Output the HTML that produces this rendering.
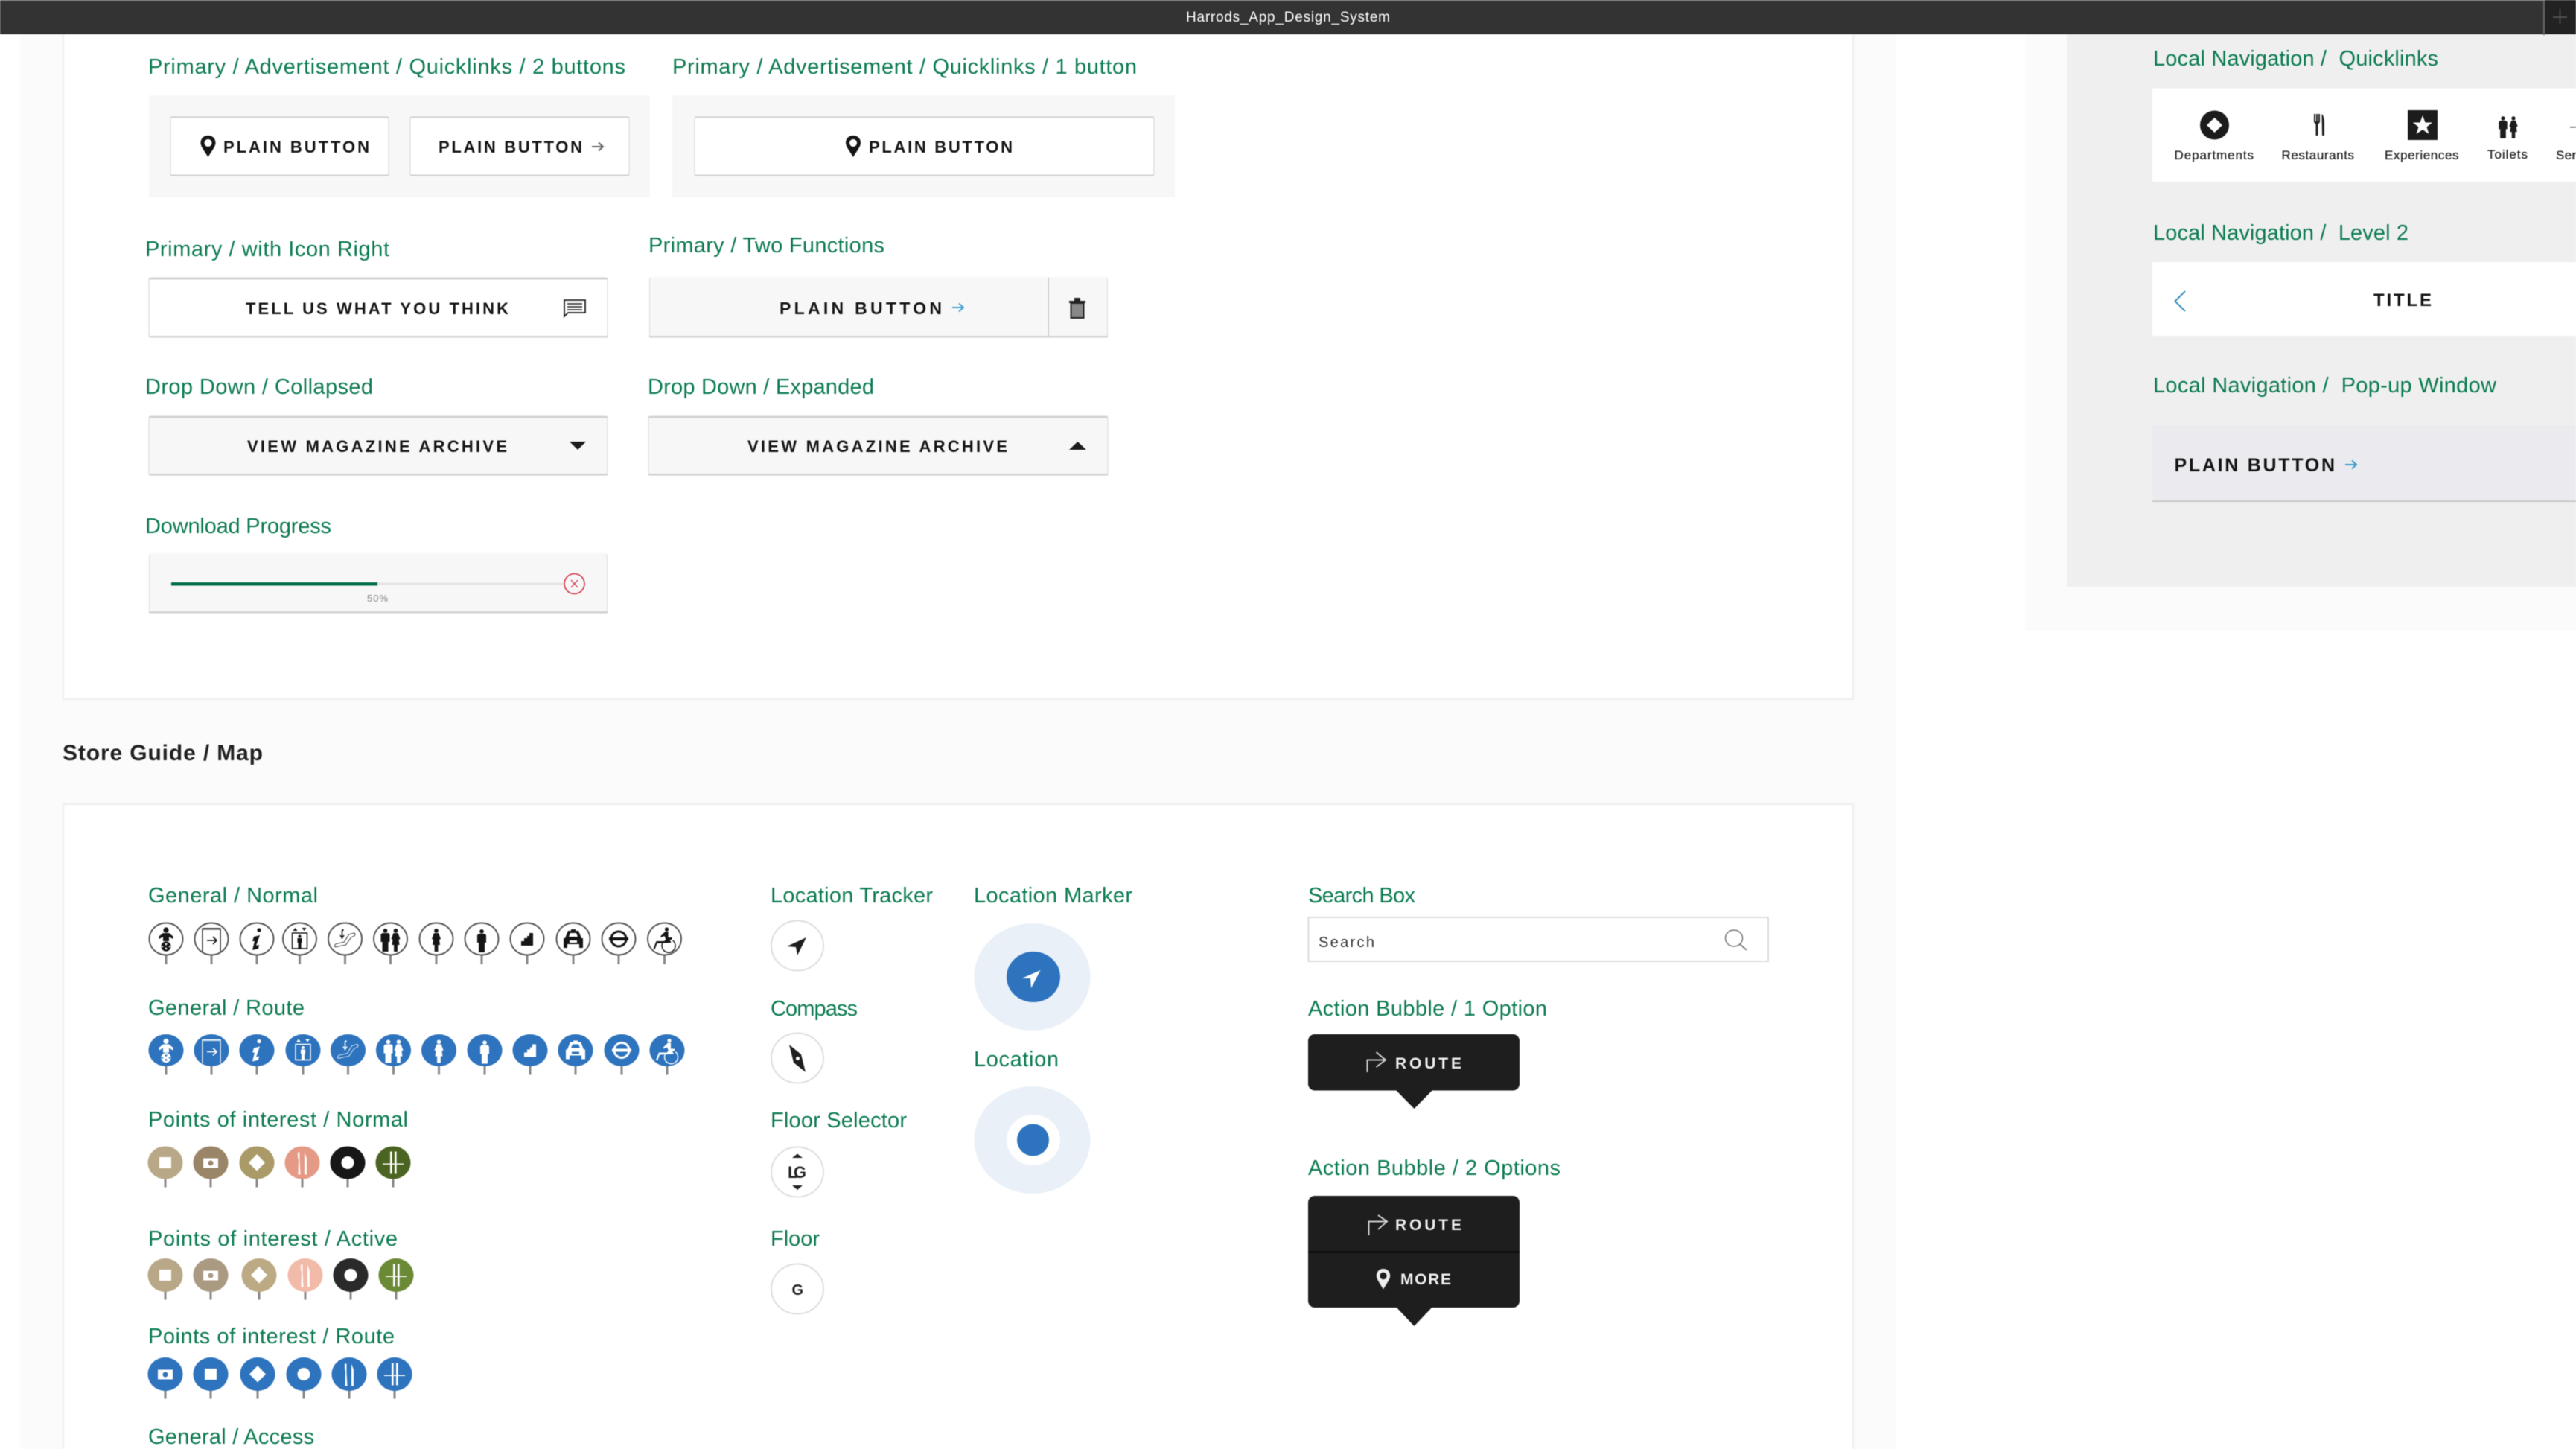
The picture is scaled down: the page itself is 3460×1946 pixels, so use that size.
<!DOCTYPE html>
<html lang="en"><head><meta charset="utf-8"><title>Harrods_App_Design_System</title>
<style>
html,body{margin:0;padding:0;background:#fff;width:3460px;height:1946px;overflow:hidden}
svg{display:block;position:absolute;left:0;top:0;filter:blur(.5px)}
text{font-family:"Liberation Sans",sans-serif}
.l{font-size:29px;fill:#0b7b50}
.b{font-size:22px;font-weight:700;fill:#151515}
.q{font-size:17px;fill:#2a2a2a;stroke:#2a2a2a;stroke-width:.3}
.w{font-size:21px;font-weight:700;fill:#eee}
.N{color:#151515;--bg:#fff}
.R{color:#fff;--bg:#2e73bd}
.P{color:#fff}
</style></head><body>
<svg width="3460" height="1946" viewBox="0 0 3460 1946" xmlns="http://www.w3.org/2000/svg">
<defs>
<g id="pinN"><rect x="-1.5" y="21" width="3" height="13" fill="#888"/><ellipse rx="22.5" ry="21.5" fill="#fff" stroke="#555" stroke-width="1.9"/></g>
<g id="pinR"><rect x="-1.5" y="20" width="3" height="13" fill="#888"/><ellipse rx="23.5" ry="21.5" fill="#2e73bd"/></g>
<rect id="st" x="-1.5" y="20" width="3" height="13" fill="#888"/>
<g id="baby" fill="currentColor"><circle cx="0" cy="-12" r="3.6"/><path d="M-4-8H4L10-3 9 0 4-3V3H-4V-3L-9 0-10-3Z"/><circle cy="10" r="6.6"/><path d="M-2 6H2L0 9ZM-2 14H2L0 11ZM-6 9-3 10-6 12ZM6 9 3 10 6 12Z" fill="var(--bg)"/></g>
<g id="exit" fill="none" stroke="currentColor"><path d="M-12 17V-14H12V17" stroke-width="1.3"/><path d="M-12-13.5H12" stroke-width="2.4" opacity=".6"/><path d="M-6 2H6M2-3 7 2 2 7" stroke-width="1.6"/></g>
<g id="info" fill="currentColor"><circle cx="3" cy="-12" r="2.6"/><path d="M-4-3 4-5-1 9 3 8 2 13-6 15-3 3-6 3Z"/></g>
<g id="lift" fill="currentColor"><path d="M-10-8H10V13H-10Z" fill="none" stroke="currentColor" stroke-width="1.4"/><circle cy="-3.5" r="2"/><path d="M-3-1H3V5H2V13H-2V5H-3Z"/><path d="M-9-11-6-15-3-11ZM3-15H9L6-11Z"/></g>
<g id="esc" fill="none" stroke="currentColor"><path d="M-14 10C-14 7-12 6-9 6L-1 4 5-6 12-8C14-8 14-5 12-4L8-2 1 8-9 10C-12 11-14 11-14 10Z" stroke-width=".8"/><path d="M-4-12V-1M-6.5-5-4-1-1.500-5" stroke-width="1.5"/><circle cx="-3" cy="-12" r="1.2" fill="currentColor" stroke="none"/></g>
<path id="man" fill="currentColor" d="M0-15A2.8 2.8 0 1 1-.01-15ZM-4-9H4L6-7V3H4V16H-4V3H-6V-7Z"/>
<path id="wom" fill="currentColor" d="M0-15A2.8 2.8 0 1 1-.01-15ZM-3-9H3L6-1 4 0 5 7H2.4V16H-2.4V7H-5L-4 0-6-1Z"/>
<g id="wc"><use href="#man" transform="translate(-7,1)"/><use href="#wom" transform="translate(7,1)"/></g>
<g id="lady"><use href="#wom" transform="translate(0,1)"/></g>
<g id="gent"><use href="#man" transform="translate(0,2)"/></g>
<path id="stair" fill="currentColor" d="M-8 9V3H-4V-1H0V-4H3V-8H8V9Z"/>
<g id="taxi" fill="currentColor"><path d="M-7-11H7L11-1H13V12H8V7H-8V12H-13V-1H-11Z"/><path d="M-4-8H4L6-3H-6Z" fill="var(--bg)"/><path d="M-3-13H3V-11H-3Z"/><path d="M-5 2H5V5H-5Z" fill="var(--bg)"/></g>
<g id="tube" fill="none" stroke="currentColor"><ellipse cx="0" cy="0" rx="10" ry="10" stroke-width="3"/><path d="M-13 0H13" stroke-width="4"/></g>
<g id="chair"><g fill="currentColor"><circle cx="3" cy="-13" r="2.6"/><path d="M1-10H5V-2H10V1H2L0-4-5-2V-4Z"/><path d="M1 1H7L9 5-10 6-13 14-15 13-11 3H0Z"/></g><path d="M-1 3A9 9 0 1 0 11 2" fill="none" stroke="currentColor" stroke-width="1.4"/></g>
<rect id="pSq" x="-8" y="-7.5" width="16" height="15" fill="#fff"/>
<path id="pDi" fill="#fff" d="M0-11.5 11 0 0 11-11 0Z"/>
<circle id="pCi" r="8.5" fill="#fff"/>
<g id="pCu" fill="#fff"><path d="M-6-14H-3.5V-3L-2.5 16H-5.5L-5-3-6-8Z"/><path d="M3-14 6-6V16H3Z"/></g>
<g id="pPl" fill="#fff"><rect x="-4" y="-15" width="2.6" height="30"/><rect x="2" y="-15" width="2.6" height="30"/><rect x="-14" y="1" width="28" height="1.4"/></g>
<g id="pin"><path fill="currentColor" fill-rule="evenodd" d="M0 0C6 0 10 4 10 10 10 15 4 22 0 29-4 22-10 15-10 10-10 4-6 0 0 0ZM0 5A5 5 0 1 0 .01 5Z"/></g>
<path id="arr" d="M0 0H15M9-5.5 15 0 9 5.5" fill="none" stroke="currentColor" stroke-width="2"/>
</defs>

<!-- page backgrounds -->
<rect x="27" y="46" width="2520" height="1900" fill="#fbfbfb"/>
<rect x="2720" y="46" width="740" height="801" fill="#fbfbfb"/>
<rect x="2776" y="46" width="684" height="742" fill="#efefef"/>
<rect x="85" y="40" width="2404" height="899" fill="#fff" stroke="#f0f0f0" stroke-width="2.5"/>
<rect x="85" y="1080" width="2404" height="900" fill="#fff" stroke="#f0f0f0" stroke-width="2.5"/>

<!-- title bar -->
<rect width="3460" height="46" fill="#333"/>
<rect width="3460" height="2" fill="#5a5a5a"/>
<rect y="45" width="3460" height="1" fill="#2a2a2a"/>
<rect x="3417" y="0" width="43" height="46" fill="#222"/>
<rect x="3416" y="0" width="2" height="47" fill="#666"/>
<path d="M3429 23H3448M3438.500 12V32" stroke="#5a5a5a" stroke-width="1.5"/>
<text x="1593" y="29" font-size="19" fill="#fff" textLength="274">Harrods_App_Design_System</text>

<!-- first section labels -->
<text class="l" x="199" y="99" textLength="641">Primary / Advertisement / Quicklinks / 2 buttons</text>
<text class="l" x="903" y="99" textLength="624">Primary / Advertisement / Quicklinks / 1 button</text>
<rect x="200" y="128" width="673" height="137" fill="#f7f7f7"/>
<rect x="903" y="128" width="675" height="137" fill="#f7f7f7"/>

<g fill="#fff" stroke="#dcdcdc" stroke-width="1.2">
<rect x="229" y="157" width="293" height="79" rx="3"/>
<rect x="551" y="157" width="294" height="79" rx="3"/>
<rect x="933" y="157" width="617" height="79" rx="3"/>
<rect x="200" y="373" width="616" height="80" rx="3"/>
</g>
<g fill="#d2d2d2">
<rect x="229" y="156.500" width="293" height="2"/><rect x="229" y="234.500" width="293" height="2"/>
<rect x="551" y="156.500" width="294" height="2"/><rect x="551" y="234.500" width="294" height="2"/>
<rect x="933" y="156.500" width="617" height="2"/><rect x="933" y="234.500" width="617" height="2"/>
<rect x="200" y="373" width="616" height="2.500"/><rect x="200" y="451" width="616" height="2.500"/>
</g>
<g style="color:#151515"><use href="#pin" transform="translate(279.500,182)"/><use href="#pin" transform="translate(1146,182)"/></g>
<text class="b" x="300" y="205" textLength="196">PLAIN BUTTON</text>
<text class="b" x="589" y="205" textLength="193">PLAIN BUTTON</text>
<use href="#arr" transform="translate(795,197)" style="color:#666"/>
<text class="b" x="1167" y="205" textLength="193">PLAIN BUTTON</text>

<text class="l" x="195" y="344" textLength="328">Primary / with Icon Right</text>
<text class="l" x="871" y="339" textLength="317">Primary / Two Functions</text>
<text class="b" x="330" y="422" textLength="353">TELL US WHAT YOU THINK</text>
<g fill="none" stroke="#222"><path d="M758 403H786V420H763L758 425Z" stroke-width="1.800"/><path d="M762 408H782M762 412H782M762 416H782" stroke-width="1.500"/></g>

<rect x="872.500" y="373" width="615" height="80" rx="3" fill="#f7f7f7" stroke="#e2e2e2" stroke-width="1.200"/>
<rect x="872" y="451" width="616" height="2.500" fill="#d2d2d2"/>
<rect x="872" y="372" width="616" height="2" fill="#f7f7f7"/>
<rect x="1407.500" y="373" width="1.500" height="80" fill="#ccc"/>
<text class="b" x="1047" y="422" textLength="218" style="font-size:23px">PLAIN BUTTON</text>
<use href="#arr" transform="translate(1279,413)" style="color:#4aa3d0"/>
<g><path d="M1436 404H1458V407H1436ZM1443 400H1451V404H1443Z" fill="#222"/><path d="M1438.500 407H1455.500V427H1438.500Z" fill="#888" stroke="#222" stroke-width="2"/></g>

<text class="l" x="195" y="529" textLength="306">Drop Down / Collapsed</text>
<text class="l" x="870" y="529" textLength="304">Drop Down / Expanded</text>
<g fill="#f7f7f7" stroke="#dedede" stroke-width="1.200"><rect x="200" y="559" width="616" height="79" rx="3"/><rect x="871" y="559" width="617" height="79" rx="3"/></g>
<g fill="#d2d2d2"><rect x="200" y="559" width="616" height="2.500"/><rect x="200" y="636" width="616" height="2.500"/><rect x="871" y="559" width="617" height="2.500"/><rect x="871" y="636" width="617" height="2.500"/></g>
<text class="b" x="332" y="607" textLength="349">VIEW MAGAZINE ARCHIVE</text>
<text class="b" x="1004" y="607" textLength="349">VIEW MAGAZINE ARCHIVE</text>
<path d="M765 593H787L776 604Z" fill="#1c1c1c"/>
<path d="M1436 604H1459L1447.500 593Z" fill="#1c1c1c"/>

<text class="l" x="195" y="716" textLength="250">Download Progress</text>
<rect x="200.500" y="744" width="615" height="79" rx="3" fill="#f7f7f7" stroke="#e2e2e2" stroke-width="1.200"/>
<rect x="200" y="743" width="616" height="2" fill="#f7f7f7"/>
<rect x="200" y="821" width="616" height="2.500" fill="#d2d2d2"/>
<rect x="230" y="782.500" width="528" height="3.500" fill="#e6e6e6"/>
<rect x="230" y="782" width="277" height="4.500" fill="#04704a"/>
<text x="493" y="808" font-size="13" fill="#888" textLength="28">50%</text>
<ellipse cx="771.500" cy="784" rx="13.500" ry="13.500" fill="none" stroke="#d7354a" stroke-width="1.600"/>
<path d="M767 779 776 789M776 779 767 789" stroke="#d7354a" stroke-width="1.300"/>

<text x="84" y="1021" font-size="30" font-weight="700" fill="#222" textLength="269">Store Guide / Map</text>

<!-- Map labels -->
<text class="l" x="199" y="1212" textLength="228">General / Normal</text>
<text class="l" x="199" y="1363" textLength="210">General / Route</text>
<text class="l" x="199" y="1513" textLength="349">Points of interest / Normal</text>
<text class="l" x="199" y="1673" textLength="335">Points of interest / Active</text>
<text class="l" x="199" y="1804" textLength="331">Points of interest / Route</text>
<text class="l" x="199" y="1939" textLength="223">General / Access</text>
<text class="l" x="1035" y="1212" textLength="218">Location Tracker</text>
<text class="l" x="1035" y="1364" textLength="117">Compass</text>
<text class="l" x="1035" y="1514" textLength="183">Floor Selector</text>
<text class="l" x="1035" y="1673" textLength="66">Floor</text>
<text class="l" x="1308" y="1212" textLength="213">Location Marker</text>
<text class="l" x="1308" y="1432" textLength="114">Location</text>
<text class="l" x="1757" y="1212" textLength="144">Search Box</text>
<text class="l" x="1757" y="1364" textLength="321">Action Bubble / 1 Option</text>
<text class="l" x="1757" y="1578" textLength="339">Action Bubble / 2 Options</text>

<!-- General / Normal -->
<g class="N">
<g transform="translate(223,1261)"><use href="#pinN"/><use href="#baby"/></g>
<g transform="translate(284,1261)"><use href="#pinN"/><use href="#exit"/></g>
<g transform="translate(345,1261)"><use href="#pinN"/><use href="#info"/></g>
<g transform="translate(402.500,1261)"><use href="#pinN"/><use href="#lift"/></g>
<g transform="translate(463.500,1261)"><use href="#pinN"/><use href="#esc"/></g>
<g transform="translate(524.500,1261)"><use href="#pinN"/><use href="#wc"/></g>
<g transform="translate(586,1261)"><use href="#pinN"/><use href="#lady"/></g>
<g transform="translate(647,1261)"><use href="#pinN"/><use href="#gent"/></g>
<g transform="translate(708,1261)"><use href="#pinN"/><use href="#stair"/></g>
<g transform="translate(770,1261)"><use href="#pinN"/><use href="#taxi"/></g>
<g transform="translate(831,1261)"><use href="#pinN"/><use href="#tube"/></g>
<g transform="translate(892.500,1261)"><use href="#pinN"/><use href="#chair"/></g>
</g>
<!-- General / Route -->
<g class="R">
<g transform="translate(223,1410.500)"><use href="#pinR"/><use href="#baby"/></g>
<g transform="translate(284,1410.500)"><use href="#pinR"/><use href="#exit"/></g>
<g transform="translate(345,1410.500)"><use href="#pinR"/><use href="#info"/></g>
<g transform="translate(407,1410.500)"><use href="#pinR"/><use href="#lift"/></g>
<g transform="translate(467.500,1410.500)"><use href="#pinR"/><use href="#esc"/></g>
<g transform="translate(528.500,1410.500)"><use href="#pinR"/><use href="#wc"/></g>
<g transform="translate(589.500,1410.500)"><use href="#pinR"/><use href="#lady"/></g>
<g transform="translate(651,1410.500)"><use href="#pinR"/><use href="#gent"/></g>
<g transform="translate(712,1410.500)"><use href="#pinR"/><use href="#stair"/></g>
<g transform="translate(773,1410.500)"><use href="#pinR"/><use href="#taxi"/></g>
<g transform="translate(835,1410.500)"><use href="#pinR"/><use href="#tube"/></g>
<g transform="translate(896,1410.500)"><use href="#pinR"/><use href="#chair"/></g>
</g>

<!-- POI normal -->
<g transform="translate(222,1561.500)"><use href="#st"/><ellipse rx="23.500" ry="22" fill="#b9a888"/><use href="#pSq"/></g>
<g transform="translate(283,1561.500)"><use href="#st"/><ellipse rx="23.500" ry="22" fill="#9b8568"/><rect x="-10" y="-6" width="20" height="13" fill="#fff"/><circle r="3.500" cy=".5" fill="#9b8568"/></g>
<g transform="translate(345,1561.500)"><use href="#st"/><ellipse rx="23.500" ry="22" fill="#a99a68"/><use href="#pDi"/></g>
<g transform="translate(406,1561.500)"><use href="#st"/><ellipse rx="23.500" ry="22" fill="#e59a85"/><use href="#pCu"/></g>
<g transform="translate(467,1561.500)"><use href="#st"/><ellipse rx="23.500" ry="22" fill="#171717"/><use href="#pCi"/></g>
<g transform="translate(528,1561.500)"><use href="#st"/><ellipse rx="23.500" ry="22" fill="#4c6422"/><use href="#pPl"/></g>
<!-- POI active -->
<g transform="translate(222,1712.500)"><use href="#st"/><ellipse rx="23.500" ry="22.500" fill="#b9a888"/><use href="#pSq"/></g>
<g transform="translate(283,1712.500)"><use href="#st"/><ellipse rx="23.500" ry="22.500" fill="#ab9a82"/><rect x="-10" y="-6" width="20" height="13" fill="#fff"/><circle r="3.500" cy=".5" fill="#ab9a82"/></g>
<g transform="translate(348,1712.500)"><use href="#st"/><ellipse rx="23.500" ry="22.500" fill="#bcaa85"/><use href="#pDi"/></g>
<g transform="translate(410,1712.500)"><use href="#st"/><ellipse rx="23.500" ry="22.500" fill="#f2baa9"/><use href="#pCu"/></g>
<g transform="translate(471,1712.500)"><use href="#st"/><ellipse rx="23.500" ry="22.500" fill="#2a2a2a"/><use href="#pCi"/></g>
<g transform="translate(532,1712.500)"><use href="#st"/><ellipse rx="23.500" ry="22.500" fill="#6a8a35"/><use href="#pPl"/></g>
<!-- POI route -->
<g transform="translate(222,1845.500)"><use href="#st"/><ellipse rx="23.500" ry="22.500" fill="#2e73bd"/><rect x="-10" y="-6" width="20" height="13" fill="#fff"/><circle r="3.500" cy=".5" fill="#2e73bd"/></g>
<g transform="translate(283,1845.500)"><use href="#st"/><ellipse rx="23.500" ry="22.500" fill="#2e73bd"/><use href="#pSq"/></g>
<g transform="translate(346,1845.500)"><use href="#st"/><ellipse rx="23.500" ry="22.500" fill="#2e73bd"/><use href="#pDi"/></g>
<g transform="translate(408,1845.500)"><use href="#st"/><ellipse rx="23.500" ry="22.500" fill="#2e73bd"/><use href="#pCi"/></g>
<g transform="translate(469,1845.500)"><use href="#st"/><ellipse rx="23.500" ry="22.500" fill="#2e73bd"/><use href="#pCu"/></g>
<g transform="translate(530,1845.500)"><use href="#st"/><ellipse rx="23.500" ry="22.500" fill="#2e73bd"/><use href="#pPl"/></g>

<!-- Round controls -->
<g fill="#fff" stroke="#dedede" stroke-width="2">
<ellipse cx="1071" cy="1270" rx="35" ry="33.500"/>
<ellipse cx="1071" cy="1421" rx="35" ry="33.500"/>
<ellipse cx="1071" cy="1574" rx="35" ry="33.500"/>
<ellipse cx="1071" cy="1731" rx="35" ry="33.500"/>
</g>
<path d="M1083 1259 1071 1283 1069 1272 1057 1271Z" fill="#1e1e1e"/>
<path d="M1060 1403 1076 1416 1082 1440 1066 1427Z" fill="#1e1e1e"/><circle cx="1071.500" cy="1421.500" r="2.500" fill="#fff"/>
<path d="M1064 1555 1071 1549.500 1078 1555ZM1064 1592 1071 1598 1078 1592Z" fill="#222"/>
<text x="1058" y="1582" font-size="22" font-weight="700" fill="#222" textLength="25">LG</text>
<text x="1063.500" y="1739" font-size="20" font-weight="700" fill="#222" textLength="14">G</text>

<!-- Location marker -->
<ellipse cx="1386.500" cy="1312" rx="78" ry="72" fill="#e9f0f8"/>
<ellipse cx="1388" cy="1312" rx="36" ry="34" fill="#2e73bd"/>
<path d="M1397.500 1303 1385 1327 1384 1314 1372.500 1314Z" fill="#fff"/>
<ellipse cx="1386.500" cy="1531" rx="78" ry="72" fill="#e9f0f8"/>
<ellipse cx="1388" cy="1531" rx="36" ry="34" fill="#fff"/>
<ellipse cx="1387.500" cy="1531" rx="21.500" ry="21.500" fill="#2e73bd"/>

<!-- Search box -->
<rect x="1757.500" y="1232" width="617.500" height="59" fill="#fff" stroke="#dcdcdc" stroke-width="2"/>
<text x="1771" y="1272" font-size="20" fill="#333" textLength="75">Search</text>
<ellipse cx="2329" cy="1260" rx="11.500" ry="11" fill="none" stroke="#777" stroke-width="1.500"/>
<path d="M2337 1268 2346 1276" stroke="#777" stroke-width="1.800"/>

<!-- Action bubbles -->
<rect x="1757" y="1389" width="284" height="75.500" rx="9" fill="#1e1e1e"/>
<path d="M1874 1463H1925L1899.500 1489Z" fill="#1e1e1e"/>
<path d="M1836.500 1440V1423.500H1861M1848.500 1413 1861 1423.500 1848.500 1433" fill="none" stroke="#ccc" stroke-width="2"/>
<text class="w" x="1874" y="1435" textLength="89">ROUTE</text>

<rect x="1757" y="1606" width="284" height="150" rx="9" fill="#1e1e1e"/>
<rect x="1757" y="1680" width="284" height="3" fill="#0e0e0e"/>
<path d="M1874 1754H1925L1899.500 1781Z" fill="#1e1e1e"/>
<path d="M1838.500 1659V1640.500H1863M1851 1632 1863 1640.500 1851 1651" fill="none" stroke="#ddd" stroke-width="1.800"/>
<text class="w" x="1874" y="1652" textLength="89">ROUTE</text>
<g style="color:#eee"><use href="#pin" transform="translate(1858,1704) scale(.92,.95)"/></g>
<text class="w" x="1881" y="1725" textLength="68">MORE</text>

<!-- Right panel -->
<text class="l" x="2892" y="88" textLength="383">Local Navigation /&#160; Quicklinks</text>
<rect x="2891" y="118.500" width="569" height="125.500" fill="#fff"/>
<ellipse cx="2974.500" cy="168" rx="19.500" ry="19.500" fill="#1c1c1c"/>
<path d="M2974.500 158 2985 168 2974.500 178 2964 168Z" fill="#fff"/>
<text class="q" x="2920.500" y="214" textLength="106.500">Departments</text>
<g fill="#222"><path d="M3108 153H3110V163H3111V153H3113V163H3114V153H3116V164L3113.500 167V182H3110.500V167L3108 164Z"/><path d="M3118.500 153C3121 155 3122 160 3122 165V182H3119Z"/></g>
<text class="q" x="3064.500" y="214" textLength="97.500">Restaurants</text>
<rect x="3234" y="148" width="40" height="40" fill="#1c1c1c"/>
<path d="M3254 155 3257.500 164.500 3267 164.500 3259.500 170.500 3262.500 180 3254 174 3245.500 180 3248.500 170.500 3241 164.500 3250.500 164.500Z" fill="#fff"/>
<text class="q" x="3203" y="214" textLength="99.500">Experiences</text>
<g style="color:#1c1c1c"><use href="#man" transform="translate(3362,170.500) scale(.95)"/><use href="#wom" transform="translate(3376,170.500) scale(.95)"/></g>
<text class="q" x="3341" y="213" textLength="54">Toilets</text>
<rect x="3452" y="170" width="8" height="1.500" fill="#555"/>
<text class="q" x="3433" y="214" textLength="27">Ser</text>

<text class="l" x="2892" y="322" textLength="343">Local Navigation /&#160; Level 2</text>
<rect x="2891" y="352" width="569" height="99" fill="#fff"/>
<path d="M2935 391 2921.500 404.500 2935 418" fill="none" stroke="#3a8fc0" stroke-width="2"/>
<text x="3188" y="411" font-size="24" font-weight="700" fill="#151515" textLength="78">TITLE</text>

<text class="l" x="2892" y="527" textLength="461">Local Navigation /&#160; Pop-up Window</text>
<rect x="2891" y="571.500" width="569" height="101.500" fill="#ebebef"/>
<rect x="2891" y="672" width="569" height="2" fill="#c8c8c8"/>
<text x="2920.500" y="633" font-size="25" font-weight="700" fill="#151515" textLength="215.500">PLAIN BUTTON</text>
<use href="#arr" transform="translate(3150,624)" style="color:#3a9ad0"/>
</svg>
</body></html>
